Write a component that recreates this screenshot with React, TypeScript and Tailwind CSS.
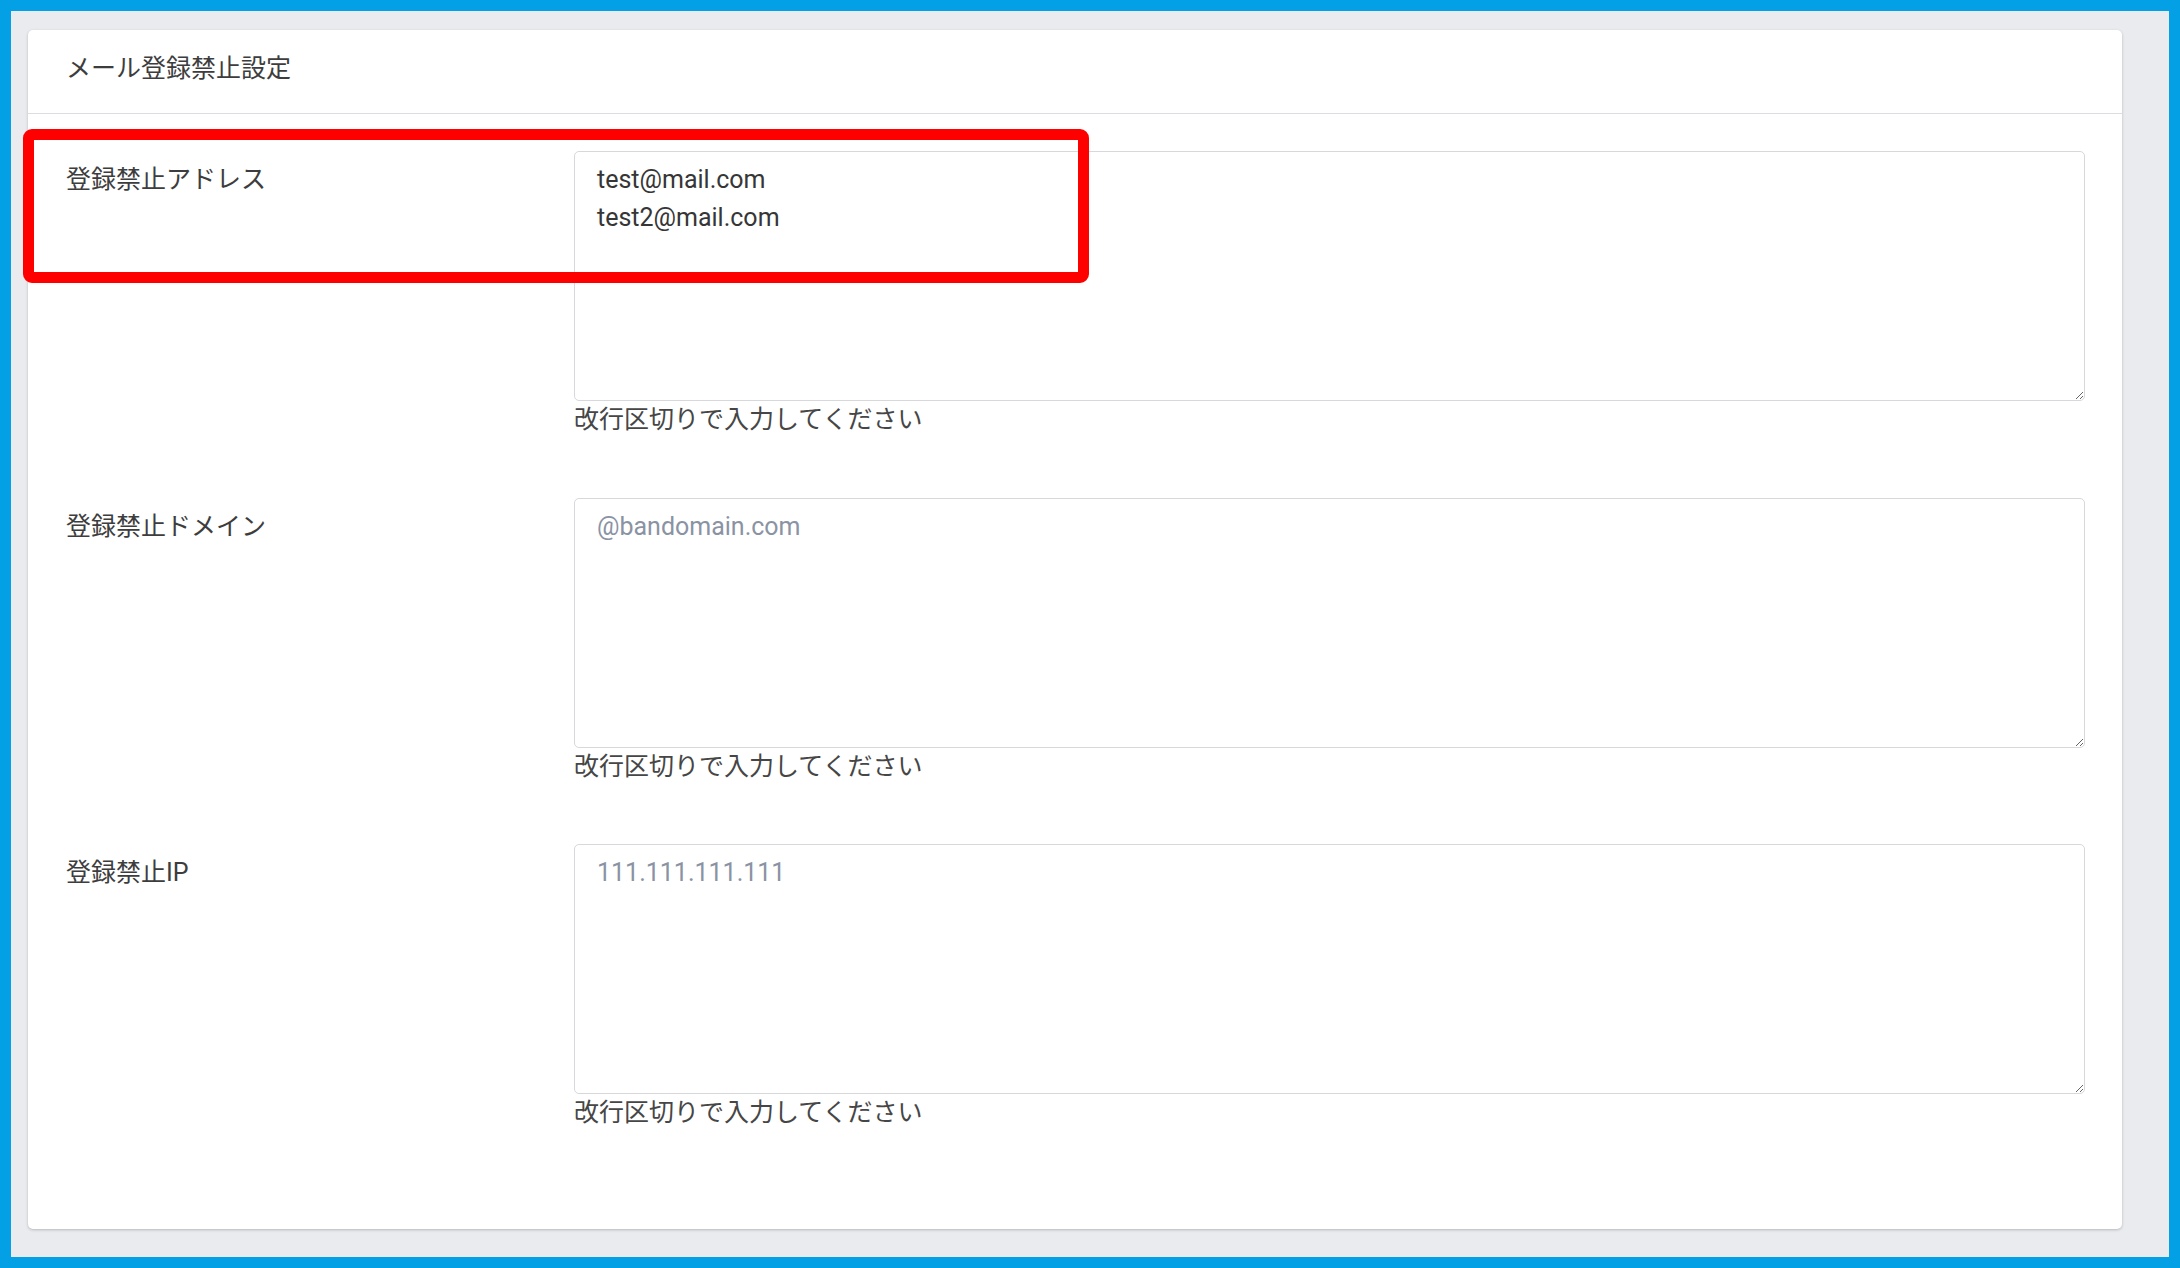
import React from "react";

interface FieldProps {
  label: string;
  value?: string;
  placeholder?: string;
}

const Field: React.FC<FieldProps> = ({ label, value, placeholder }) => {
  return (
    <div className="grid grid-cols-[508px_1fr] mb-[59px]">
      <label className="pt-[10px] text-[25px] leading-[37.5px] text-[#3d3d3d]">
        {label}
      </label>
      <div className="flex flex-col">
        <textarea
          className="h-[250px] w-full rounded-[5px] border border-[#d6d8dc] bg-white px-[22px] py-[9px] text-[25px] leading-[37.5px] text-[#363636] placeholder:text-[#8a93a3] outline-none resize-y"
          defaultValue={value}
          placeholder={placeholder}
        />
        <p className="text-[25px] leading-[37.5px] text-[#464646]">
          改行区切りで入力してください
        </p>
      </div>
    </div>
  );
};

const App: React.FC = () => {
  const fields: FieldProps[] = [
    { label: "登録禁止アドレス", value: "test@mail.com\ntest2@mail.com" },
    { label: "登録禁止ドメイン", placeholder: "@bandomain.com" },
    { label: "登録禁止IP", placeholder: "111.111.111.111" },
  ];

  return (
    <div
      className="w-[2180px] h-[1268px] border-[11px] border-[#03a0e6] bg-[#e9ebee] pt-[19px] pl-[17px] pr-[47px]"
      style={{ fontFamily: 'Roboto, "Noto Sans CJK JP", sans-serif' }}
    >
      <div className="relative rounded-[5px] bg-white shadow-[0_1px_3px_rgba(0,0,0,0.22)]">
        <div className="h-[84px] border-b border-[#dcdde1] px-[38px] flex items-center">
          <h1 className="text-[25px] leading-[37.5px] text-[#3d3d3d] -mt-[6px]">
            メール登録禁止設定
          </h1>
        </div>

        <div className="pt-[37px] pb-[38px] pl-[38px] pr-[37px]">
          {fields.map((f, i) => (
            <Field key={i} {...f} />
          ))}
        </div>

        {/* annotation box */}
        <div className="pointer-events-none absolute left-[-5px] top-[99px] w-[1066px] h-[154px] rounded-[9px] border-[11px] border-[#ff0000]" />
      </div>
    </div>
  );
};

export default App;
